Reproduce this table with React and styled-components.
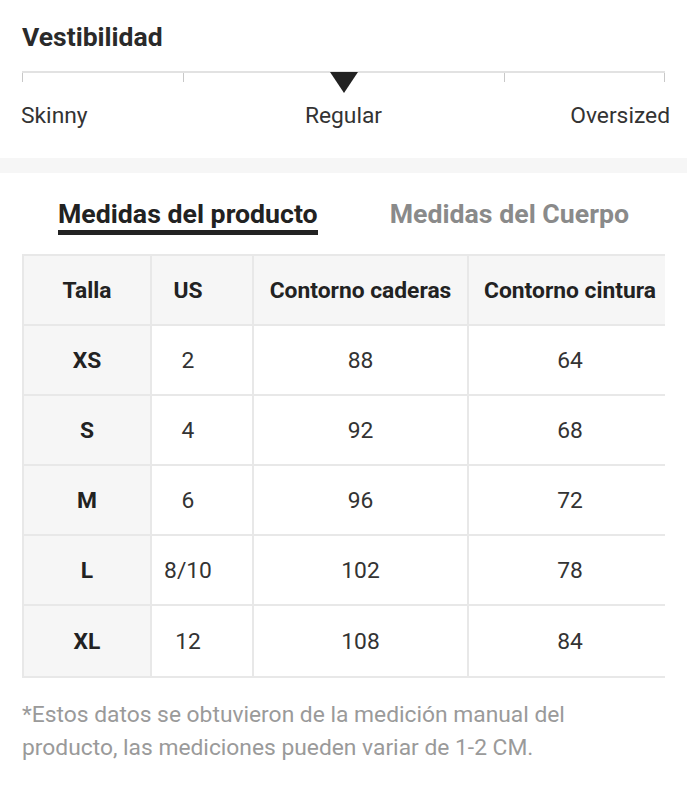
import React from "react";
import styled, { createGlobalStyle } from "styled-components";

const GlobalStyle = createGlobalStyle`
  body {
    margin: 0;
    background: #fff;
    font-family: Roboto, "Liberation Sans", sans-serif;
    color: #222;
  }
`;

const fitLabels = ["Skinny", "Regular", "Oversized"];

const headers = ["Talla", "US", "Contorno caderas", "Contorno cintura"];
const rows = [
  ["XS", "2", "88", "64"],
  ["S", "4", "92", "68"],
  ["M", "6", "96", "72"],
  ["L", "8/10", "102", "78"],
  ["XL", "12", "108", "84"],
];

function App() {
  return (
    <Page>
      <GlobalStyle />
      <FitSection>
        <Title>Vestibilidad</Title>
        <Scale>
          <Segment />
          <Segment />
          <Segment $last />
          <Marker />
        </Scale>
        <ScaleLabels>
          {fitLabels.map((l, i) => (
            <ScaleLabel key={l} $pos={i}>
              {l}
            </ScaleLabel>
          ))}
        </ScaleLabels>
      </FitSection>
      <Divider />
      <Tabs>
        <Tab $active>Medidas del producto</Tab>
        <Tab>Medidas del Cuerpo</Tab>
      </Tabs>
      <TableWrap>
        <SizeTable>
          <colgroup>
            <col style={{ width: 128 }} />
            <col style={{ width: 102 }} />
            <col style={{ width: 215 }} />
            <col style={{ width: 204 }} />
          </colgroup>
          <thead>
            <tr>
              {headers.map((h, i) => (
                <Th key={h} $col={i}>
                  {h}
                </Th>
              ))}
            </tr>
          </thead>
          <tbody>
            {rows.map((r) => (
              <tr key={r[0]}>
                {r.map((v, i) => (
                  <Td key={i} $col={i}>
                    {v}
                  </Td>
                ))}
              </tr>
            ))}
          </tbody>
        </SizeTable>
      </TableWrap>
      <Note>
        *Estos datos se obtuvieron de la medición manual del producto, las
        mediciones pueden variar de 1-2 CM.
      </Note>
    </Page>
  );
}

const Page = styled.div`
  width: 687px;
  min-height: 800px;
  background: #fff;
`;

const FitSection = styled.section`
  padding: 22px 22px 0;
`;

const Title = styled.h2`
  margin: 0;
  font-size: 26.5px;
  line-height: 30px;
  font-weight: 700;
  color: #2a2a2a;
`;

const Scale = styled.div`
  position: relative;
  margin-top: 19px;
  display: grid;
  grid-template-columns: 1fr 2fr 1fr;
  border-top: 2px solid #e2e2e2;
  height: 9px;
`;

const Segment = styled.div`
  border-left: 1px solid #c8c8c8;
  border-right: ${(p) => (p.$last ? "1px solid #c8c8c8" : "none")};
`;

const Marker = styled.div`
  position: absolute;
  left: 50%;
  top: -1px;
  transform: translateX(-50%);
  width: 0;
  height: 0;
  border-left: 14px solid transparent;
  border-right: 14px solid transparent;
  border-top: 21px solid #222;
`;

const ScaleLabels = styled.div`
  display: grid;
  grid-template-columns: 1fr auto 1fr;
  margin: 21px -5px 0 -1px;
`;

const ScaleLabel = styled.span`
  font-size: 22.8px;
  line-height: 26px;
  color: #333;
  text-align: ${(p) => (p.$pos === 0 ? "left" : p.$pos === 2 ? "right" : "center")};
  transform: ${(p) => (p.$pos === 1 ? "translateX(-2px)" : "none")};
`;

const Divider = styled.div`
  margin-top: 29px;
  height: 15px;
  background: #f6f6f6;
`;

const Tabs = styled.div`
  display: flex;
  justify-content: center;
  gap: 72px;
  margin-top: 26px;
`;

const Tab = styled.div`
  font-size: 26.7px;
  line-height: 31px;
  font-weight: 700;
  color: ${(p) => (p.$active ? "#222" : "#8a8a8a")};
  border-bottom: 5px solid ${(p) => (p.$active ? "#222" : "transparent")};
`;

const TableWrap = styled.div`
  margin: 19px 22px 0;
  overflow: hidden;
`;

const SizeTable = styled.table`
  width: 649px;
  table-layout: fixed;
  border-collapse: collapse;
  font-size: 22.8px;
  tr {
    height: 70px;
  }
  tbody tr:last-child {
    height: 72px;
  }
`;

const Cell = styled.td`
  border: 2px solid #e8e8e8;
  padding: 0 ${(p) => (p.$col === 1 ? "28px" : "0")} 0 0;
  text-align: center;
  vertical-align: middle;
  white-space: nowrap;
`;

const Th = styled(Cell).attrs({ as: "th" })`
  background: #f6f6f6;
  font-weight: 700;
  color: #222;
`;

const Td = styled(Cell)`
  background: ${(p) => (p.$col === 0 ? "#f6f6f6" : "#fff")};
  font-weight: ${(p) => (p.$col === 0 ? 700 : 400)};
  color: ${(p) => (p.$col === 0 ? "#222" : "#333")};
`;

const Note = styled.p`
  margin: 20px 22px 0;
  max-width: 620px;
  font-size: 22.8px;
  line-height: 33px;
  color: #9a9a9a;
`;

export default App;
